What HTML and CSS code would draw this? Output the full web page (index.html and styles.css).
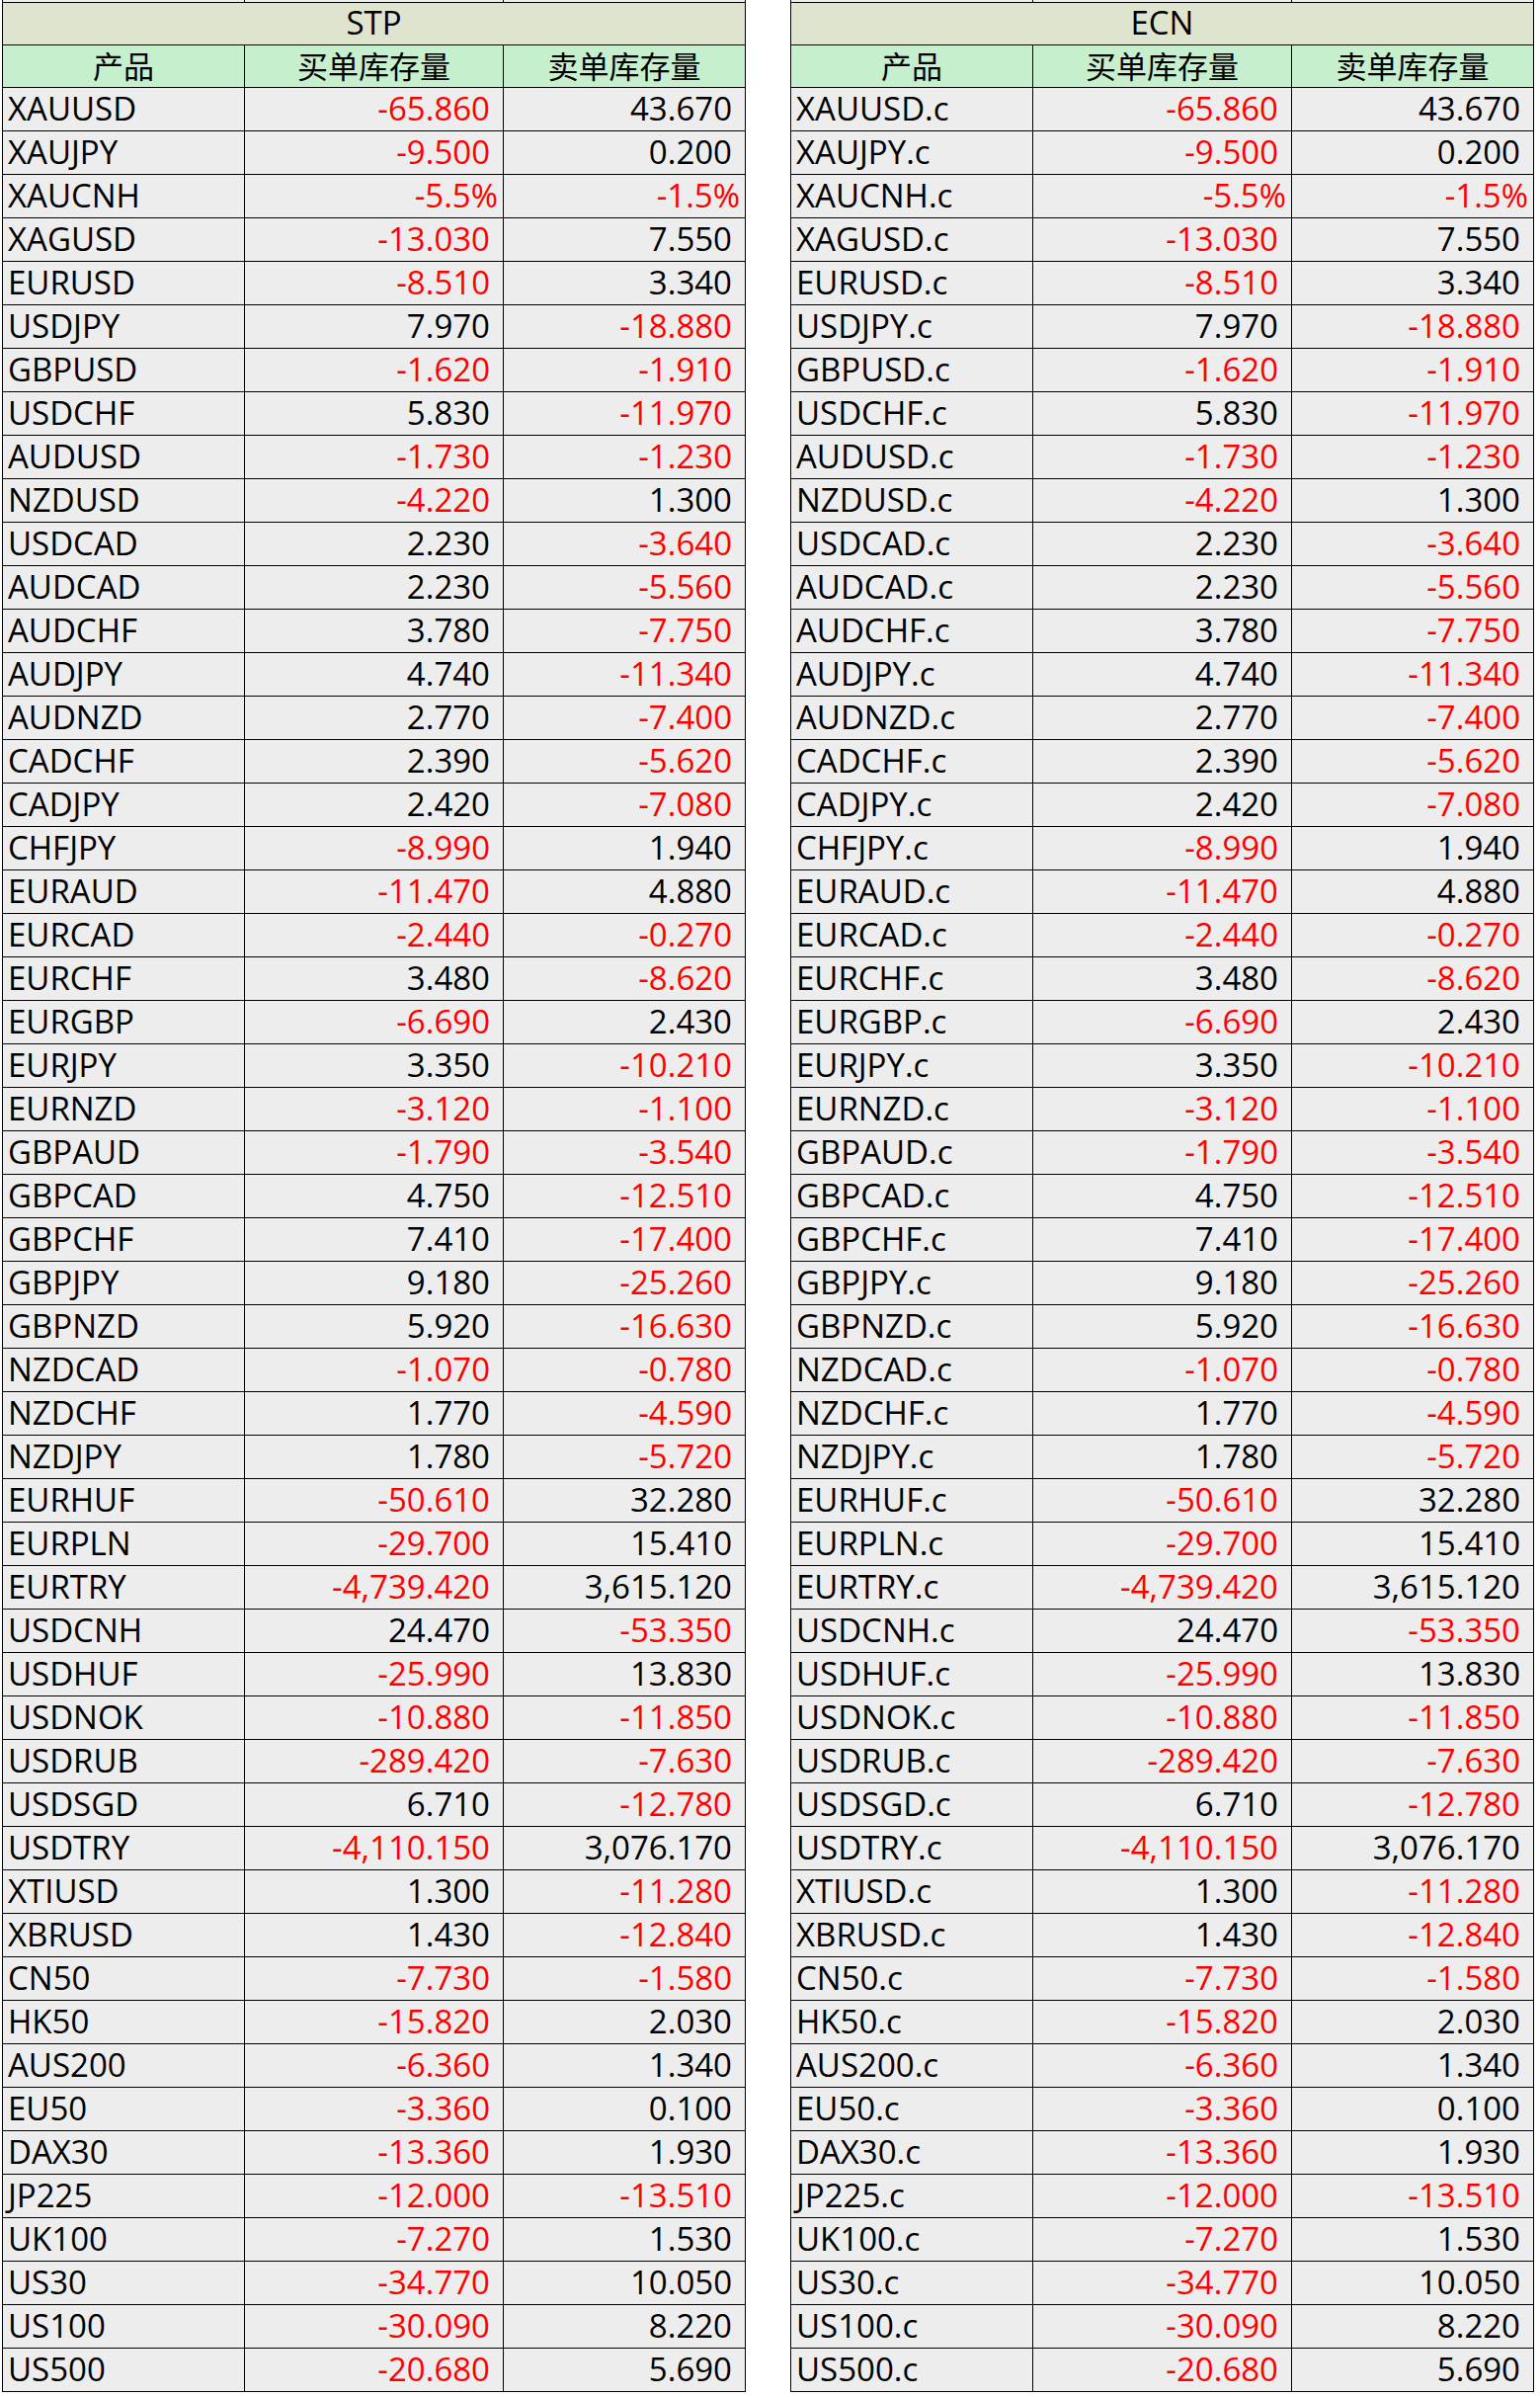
FILE: index.html
```html
<!DOCTYPE html>
<html lang="zh-CN">
<head>
<meta charset="utf-8">
<title>库存费</title>
<link rel="stylesheet" href="styles.css">
</head>
<body>
<div class="page">
<div class="sheet">
<div class="sliver"></div><div class="sliver"></div><div class="sliver"></div>
<div class="title">STP</div>
<div class="head">产品</div><div class="head">买单库存量</div><div class="head">卖单库存量</div>
<div class="sym">XAUUSD</div><div class="num neg">-65.860</div><div class="num">43.670</div>
<div class="sym">XAUJPY</div><div class="num neg">-9.500</div><div class="num">0.200</div>
<div class="sym">XAUCNH</div><div class="num neg pct">-5.5%</div><div class="num neg pct">-1.5%</div>
<div class="sym">XAGUSD</div><div class="num neg">-13.030</div><div class="num">7.550</div>
<div class="sym">EURUSD</div><div class="num neg">-8.510</div><div class="num">3.340</div>
<div class="sym">USDJPY</div><div class="num">7.970</div><div class="num neg">-18.880</div>
<div class="sym">GBPUSD</div><div class="num neg">-1.620</div><div class="num neg">-1.910</div>
<div class="sym">USDCHF</div><div class="num">5.830</div><div class="num neg">-11.970</div>
<div class="sym">AUDUSD</div><div class="num neg">-1.730</div><div class="num neg">-1.230</div>
<div class="sym">NZDUSD</div><div class="num neg">-4.220</div><div class="num">1.300</div>
<div class="sym">USDCAD</div><div class="num">2.230</div><div class="num neg">-3.640</div>
<div class="sym">AUDCAD</div><div class="num">2.230</div><div class="num neg">-5.560</div>
<div class="sym">AUDCHF</div><div class="num">3.780</div><div class="num neg">-7.750</div>
<div class="sym">AUDJPY</div><div class="num">4.740</div><div class="num neg">-11.340</div>
<div class="sym">AUDNZD</div><div class="num">2.770</div><div class="num neg">-7.400</div>
<div class="sym">CADCHF</div><div class="num">2.390</div><div class="num neg">-5.620</div>
<div class="sym">CADJPY</div><div class="num">2.420</div><div class="num neg">-7.080</div>
<div class="sym">CHFJPY</div><div class="num neg">-8.990</div><div class="num">1.940</div>
<div class="sym">EURAUD</div><div class="num neg">-11.470</div><div class="num">4.880</div>
<div class="sym">EURCAD</div><div class="num neg">-2.440</div><div class="num neg">-0.270</div>
<div class="sym">EURCHF</div><div class="num">3.480</div><div class="num neg">-8.620</div>
<div class="sym">EURGBP</div><div class="num neg">-6.690</div><div class="num">2.430</div>
<div class="sym">EURJPY</div><div class="num">3.350</div><div class="num neg">-10.210</div>
<div class="sym">EURNZD</div><div class="num neg">-3.120</div><div class="num neg">-1.100</div>
<div class="sym">GBPAUD</div><div class="num neg">-1.790</div><div class="num neg">-3.540</div>
<div class="sym">GBPCAD</div><div class="num">4.750</div><div class="num neg">-12.510</div>
<div class="sym">GBPCHF</div><div class="num">7.410</div><div class="num neg">-17.400</div>
<div class="sym">GBPJPY</div><div class="num">9.180</div><div class="num neg">-25.260</div>
<div class="sym">GBPNZD</div><div class="num">5.920</div><div class="num neg">-16.630</div>
<div class="sym">NZDCAD</div><div class="num neg">-1.070</div><div class="num neg">-0.780</div>
<div class="sym">NZDCHF</div><div class="num">1.770</div><div class="num neg">-4.590</div>
<div class="sym">NZDJPY</div><div class="num">1.780</div><div class="num neg">-5.720</div>
<div class="sym">EURHUF</div><div class="num neg">-50.610</div><div class="num">32.280</div>
<div class="sym">EURPLN</div><div class="num neg">-29.700</div><div class="num">15.410</div>
<div class="sym">EURTRY</div><div class="num neg">-4,739.420</div><div class="num">3,615.120</div>
<div class="sym">USDCNH</div><div class="num">24.470</div><div class="num neg">-53.350</div>
<div class="sym">USDHUF</div><div class="num neg">-25.990</div><div class="num">13.830</div>
<div class="sym">USDNOK</div><div class="num neg">-10.880</div><div class="num neg">-11.850</div>
<div class="sym">USDRUB</div><div class="num neg">-289.420</div><div class="num neg">-7.630</div>
<div class="sym">USDSGD</div><div class="num">6.710</div><div class="num neg">-12.780</div>
<div class="sym">USDTRY</div><div class="num neg">-4,110.150</div><div class="num">3,076.170</div>
<div class="sym">XTIUSD</div><div class="num">1.300</div><div class="num neg">-11.280</div>
<div class="sym">XBRUSD</div><div class="num">1.430</div><div class="num neg">-12.840</div>
<div class="sym">CN50</div><div class="num neg">-7.730</div><div class="num neg">-1.580</div>
<div class="sym">HK50</div><div class="num neg">-15.820</div><div class="num">2.030</div>
<div class="sym">AUS200</div><div class="num neg">-6.360</div><div class="num">1.340</div>
<div class="sym">EU50</div><div class="num neg">-3.360</div><div class="num">0.100</div>
<div class="sym">DAX30</div><div class="num neg">-13.360</div><div class="num">1.930</div>
<div class="sym">JP225</div><div class="num neg">-12.000</div><div class="num neg">-13.510</div>
<div class="sym">UK100</div><div class="num neg">-7.270</div><div class="num">1.530</div>
<div class="sym">US30</div><div class="num neg">-34.770</div><div class="num">10.050</div>
<div class="sym">US100</div><div class="num neg">-30.090</div><div class="num">8.220</div>
<div class="sym">US500</div><div class="num neg">-20.680</div><div class="num">5.690</div>
</div>

<div class="sheet">
<div class="sliver"></div><div class="sliver"></div><div class="sliver"></div>
<div class="title">ECN</div>
<div class="head">产品</div><div class="head">买单库存量</div><div class="head">卖单库存量</div>
<div class="sym">XAUUSD.c</div><div class="num neg">-65.860</div><div class="num">43.670</div>
<div class="sym">XAUJPY.c</div><div class="num neg">-9.500</div><div class="num">0.200</div>
<div class="sym">XAUCNH.c</div><div class="num neg pct">-5.5%</div><div class="num neg pct">-1.5%</div>
<div class="sym">XAGUSD.c</div><div class="num neg">-13.030</div><div class="num">7.550</div>
<div class="sym">EURUSD.c</div><div class="num neg">-8.510</div><div class="num">3.340</div>
<div class="sym">USDJPY.c</div><div class="num">7.970</div><div class="num neg">-18.880</div>
<div class="sym">GBPUSD.c</div><div class="num neg">-1.620</div><div class="num neg">-1.910</div>
<div class="sym">USDCHF.c</div><div class="num">5.830</div><div class="num neg">-11.970</div>
<div class="sym">AUDUSD.c</div><div class="num neg">-1.730</div><div class="num neg">-1.230</div>
<div class="sym">NZDUSD.c</div><div class="num neg">-4.220</div><div class="num">1.300</div>
<div class="sym">USDCAD.c</div><div class="num">2.230</div><div class="num neg">-3.640</div>
<div class="sym">AUDCAD.c</div><div class="num">2.230</div><div class="num neg">-5.560</div>
<div class="sym">AUDCHF.c</div><div class="num">3.780</div><div class="num neg">-7.750</div>
<div class="sym">AUDJPY.c</div><div class="num">4.740</div><div class="num neg">-11.340</div>
<div class="sym">AUDNZD.c</div><div class="num">2.770</div><div class="num neg">-7.400</div>
<div class="sym">CADCHF.c</div><div class="num">2.390</div><div class="num neg">-5.620</div>
<div class="sym">CADJPY.c</div><div class="num">2.420</div><div class="num neg">-7.080</div>
<div class="sym">CHFJPY.c</div><div class="num neg">-8.990</div><div class="num">1.940</div>
<div class="sym">EURAUD.c</div><div class="num neg">-11.470</div><div class="num">4.880</div>
<div class="sym">EURCAD.c</div><div class="num neg">-2.440</div><div class="num neg">-0.270</div>
<div class="sym">EURCHF.c</div><div class="num">3.480</div><div class="num neg">-8.620</div>
<div class="sym">EURGBP.c</div><div class="num neg">-6.690</div><div class="num">2.430</div>
<div class="sym">EURJPY.c</div><div class="num">3.350</div><div class="num neg">-10.210</div>
<div class="sym">EURNZD.c</div><div class="num neg">-3.120</div><div class="num neg">-1.100</div>
<div class="sym">GBPAUD.c</div><div class="num neg">-1.790</div><div class="num neg">-3.540</div>
<div class="sym">GBPCAD.c</div><div class="num">4.750</div><div class="num neg">-12.510</div>
<div class="sym">GBPCHF.c</div><div class="num">7.410</div><div class="num neg">-17.400</div>
<div class="sym">GBPJPY.c</div><div class="num">9.180</div><div class="num neg">-25.260</div>
<div class="sym">GBPNZD.c</div><div class="num">5.920</div><div class="num neg">-16.630</div>
<div class="sym">NZDCAD.c</div><div class="num neg">-1.070</div><div class="num neg">-0.780</div>
<div class="sym">NZDCHF.c</div><div class="num">1.770</div><div class="num neg">-4.590</div>
<div class="sym">NZDJPY.c</div><div class="num">1.780</div><div class="num neg">-5.720</div>
<div class="sym">EURHUF.c</div><div class="num neg">-50.610</div><div class="num">32.280</div>
<div class="sym">EURPLN.c</div><div class="num neg">-29.700</div><div class="num">15.410</div>
<div class="sym">EURTRY.c</div><div class="num neg">-4,739.420</div><div class="num">3,615.120</div>
<div class="sym">USDCNH.c</div><div class="num">24.470</div><div class="num neg">-53.350</div>
<div class="sym">USDHUF.c</div><div class="num neg">-25.990</div><div class="num">13.830</div>
<div class="sym">USDNOK.c</div><div class="num neg">-10.880</div><div class="num neg">-11.850</div>
<div class="sym">USDRUB.c</div><div class="num neg">-289.420</div><div class="num neg">-7.630</div>
<div class="sym">USDSGD.c</div><div class="num">6.710</div><div class="num neg">-12.780</div>
<div class="sym">USDTRY.c</div><div class="num neg">-4,110.150</div><div class="num">3,076.170</div>
<div class="sym">XTIUSD.c</div><div class="num">1.300</div><div class="num neg">-11.280</div>
<div class="sym">XBRUSD.c</div><div class="num">1.430</div><div class="num neg">-12.840</div>
<div class="sym">CN50.c</div><div class="num neg">-7.730</div><div class="num neg">-1.580</div>
<div class="sym">HK50.c</div><div class="num neg">-15.820</div><div class="num">2.030</div>
<div class="sym">AUS200.c</div><div class="num neg">-6.360</div><div class="num">1.340</div>
<div class="sym">EU50.c</div><div class="num neg">-3.360</div><div class="num">0.100</div>
<div class="sym">DAX30.c</div><div class="num neg">-13.360</div><div class="num">1.930</div>
<div class="sym">JP225.c</div><div class="num neg">-12.000</div><div class="num neg">-13.510</div>
<div class="sym">UK100.c</div><div class="num neg">-7.270</div><div class="num">1.530</div>
<div class="sym">US30.c</div><div class="num neg">-34.770</div><div class="num">10.050</div>
<div class="sym">US100.c</div><div class="num neg">-30.090</div><div class="num">8.220</div>
<div class="sym">US500.c</div><div class="num neg">-20.680</div><div class="num">5.690</div>
</div>
</div>
</body>
</html>
```
FILE: styles.css
```css
html, body {
  margin: 0;
  padding: 0;
  background: #ffffff;
}

body {
  font-family: "Open Sans", "Noto Sans CJK SC", sans-serif;
  font-size: 33px;
  color: #000000;
  overflow: hidden;
}

.page {
  display: flex;
  gap: 45px;
  padding-left: 2px;
  align-items: flex-start;
}

.sheet {
  display: grid;
  grid-template-columns: 244px 261px 244px;
  grid-template-rows: 2px 42px 42px repeat(53, 43px);
  gap: 1px;
  background: #000000;
  padding: 0 1px 1px 1px;
}

.sheet > div {
  display: flex;
  align-items: center;
  white-space: nowrap;
  background: #ededed;
  line-height: 38px;
  padding-bottom: 2px;
  box-sizing: border-box;
}

.sheet > .sliver {
  padding: 0;
  background: #ededed;
}

.sheet > .title {
  grid-column: 1 / -1;
  justify-content: center;
  background: #dfe4cf;
}

.sheet > .head {
  justify-content: center;
  background: #c6efce;
  font-family: "Noto Sans CJK SC", sans-serif;
  font-size: 31px;
}

.sym {
  padding-left: 5px;
}

.num {
  justify-content: flex-end;
  padding-right: 13px;
}

.num.pct {
  padding-right: 5px;
}

.neg {
  color: #ff0000;
}
```
